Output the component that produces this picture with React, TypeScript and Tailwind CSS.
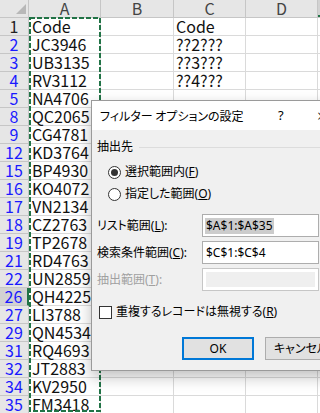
import React from "react";

const rows: [number, string, string][] = [
  [1, "Code", "Code"],
  [2, "JC3946", "??2???"],
  [3, "UB3135", "??3???"],
  [4, "RV3112", "??4???"],
  [5, "NA4706", ""],
  [8, "QC2065", ""],
  [9, "CG4781", ""],
  [12, "KD3764", ""],
  [15, "BP4930", ""],
  [16, "KO4072", ""],
  [17, "VN2134", ""],
  [18, "CZ2763", ""],
  [19, "TP2678", ""],
  [21, "RD4763", ""],
  [22, "UN2859", ""],
  [26, "QH4225", ""],
  [27, "LI3788", ""],
  [29, "QN4534", ""],
  [31, "RQ4693", ""],
  [32, "JT2883", ""],
  [34, "KV2950", ""],
  [35, "FM3418", ""],
];

const cellFont = "font-['Noto_Sans_CJK_JP',sans-serif] text-[16px] leading-[17px]";
const uiFont = "font-['Noto_Sans','Noto_Sans_CJK_JP',sans-serif] text-[12px] [font-feature-settings:'palt']";

function Radio({ checked }: { checked: boolean }) {
  return (
    <span className="flex h-[13px] w-[13px] shrink-0 items-center justify-center rounded-full border border-[#333] bg-white">
      {checked && <span className="h-[7px] w-[7px] rounded-full bg-[#333]" />}
    </span>
  );
}

export default function App() {
  return (
    <div className="relative h-[413px] w-[320px] overflow-hidden bg-white">
      {/* column header */}
      <div className={`flex h-[18px] border-b border-[#c6c6c6] bg-[#e6e6e6] text-[#444] ${cellFont}`}>
        <div className="relative w-[29px] shrink-0 border-r border-[#c6c6c6]">
          <svg className="absolute right-[2px] bottom-[3px]" width="10" height="10" viewBox="0 0 10 10">
            <polygon points="10,0 10,10 0,10" fill="#b8b8b8" />
          </svg>
        </div>
        <div className="flex w-[72px] shrink-0 items-center justify-center border-r border-[#c6c6c6]">A</div>
        <div className="flex w-[73px] shrink-0 items-center justify-center border-r border-[#c6c6c6]">B</div>
        <div className="flex w-[72px] shrink-0 items-center justify-center border-r border-[#c6c6c6]">C</div>
        <div className="flex w-[72px] shrink-0 items-center justify-center border-r border-[#c6c6c6]">D</div>
        <div className="flex-1 border-b-2 border-[#217346] bg-[#d2d2d2]" />
      </div>

      {rows.map(([n, a, c]) => (
        <div key={n} className={`flex h-[18px] ${cellFont}`}>
          <div
            className={`flex w-[29px] shrink-0 items-center justify-center border-b border-[#c6c6c6] ${
              n === 26 ? "border-r-2 border-r-[#217346] bg-[#d2d2d2]" : "border-r border-r-[#c6c6c6] bg-[#e6e6e6]"
            } ${n === 1 ? "text-[#222]" : "text-[#1a1aff]"}`}
          >
            {n}
          </div>
          <div className="w-[72px] shrink-0 border-b border-r border-[#dadada] pl-[3px] text-[#111]">{a}</div>
          <div className="w-[73px] shrink-0 border-b border-r border-[#dadada]" />
          <div className="w-[72px] shrink-0 border-b border-r border-[#dadada] pl-[2px] text-[#111]">{c}</div>
          <div className="w-[72px] shrink-0 border-b border-r border-[#dadada]" />
          <div className="flex-1 border-b border-[#dadada]" />
        </div>
      ))}

      {/* copy marquee */}
      <svg className="pointer-events-none absolute left-0 top-0" width="320" height="413">
        <rect x="30" y="18" width="70" height="393" fill="none" stroke="#217346" strokeWidth="2" strokeDasharray="5 2" />
      </svg>

      {/* dialog */}
      <div
        className={`absolute left-[91px] top-[100px] flex h-[271px] w-[262px] flex-col border border-[#9a9a9a] bg-[#f0f0f0] text-black shadow-[0_6px_14px_rgba(0,0,0,0.25)] ${uiFont}`}
      >
        <div className="flex h-[29px] shrink-0 items-center bg-white pl-[8px]">
          <span className="w-[178px] font-['Noto_Sans_CJK_JP',sans-serif]">フィルター オプションの設定</span>
          <span className="w-[39px] text-[13px]">?</span>
          <span className="text-[16px] font-light">×</span>
        </div>
        <div className="flex flex-col pl-[5px]">
          <div className="mt-[9px] flex h-[16px] items-center">
            <span>抽出先</span>
            <span className="ml-[6px] h-px flex-1 bg-[#dcdcdc]" />
          </div>
          <div className="mt-[6px] flex h-[22px] items-center gap-[4px] pl-[11px]">
            <Radio checked />
            <span>
              選択範囲内(<span className="underline">F</span>)
            </span>
          </div>
          <div className="flex h-[22px] items-center gap-[4px] pl-[11px]">
            <Radio checked={false} />
            <span>
              指定した範囲(<span className="underline">O</span>)
            </span>
          </div>
          <div className="mt-[9px] flex h-[23px] items-center">
            <span className="w-[105px]">
              リスト範囲(<span className="underline">L</span>):
            </span>
            <div className="flex h-[23px] w-[117px] items-center border border-[#adadad] bg-white pl-[2px]">
              <span className="bg-[#cccccc] px-[1px] leading-[16px]">$A$1:$A$35</span>
            </div>
          </div>
          <div className="mt-[4px] flex h-[23px] items-center">
            <span className="w-[105px]">
              検索条件範囲(<span className="underline">C</span>):
            </span>
            <div className="flex h-[23px] w-[117px] items-center border border-[#adadad] bg-white pl-[3px]">
              $C$1:$C$4
            </div>
          </div>
          <div className="mt-[4px] flex h-[23px] items-center text-[#a0a0a0]">
            <span className="w-[105px]">
              抽出範囲(<span className="underline">T</span>):
            </span>
            <div className="flex h-[23px] w-[117px] items-center border border-[#c6c6c6] bg-white p-[3px]">
              <div className="h-full w-full bg-[#efefef]" />
            </div>
          </div>
          <div className="mt-[14px] flex h-[14px] items-center gap-[4px] pl-[2px]">
            <span className="h-[13px] w-[13px] shrink-0 border border-[#333] bg-white" />
            <span>
              重複するレコードは無視する(<span className="underline">R</span>)
            </span>
          </div>
          <div className="mt-[18px] flex gap-[11px] pl-[85px]">
            <div className="flex h-[23px] w-[72px] shrink-0 items-center justify-center border-2 border-[#0078d7] bg-[#e1e1e1]">
              OK
            </div>
            <div className="flex h-[23px] w-[72px] shrink-0 items-center justify-center border border-[#adadad] bg-[#e1e1e1]">
              キャンセル
            </div>
          </div>
        </div>
      </div>
    </div>
  );
}
